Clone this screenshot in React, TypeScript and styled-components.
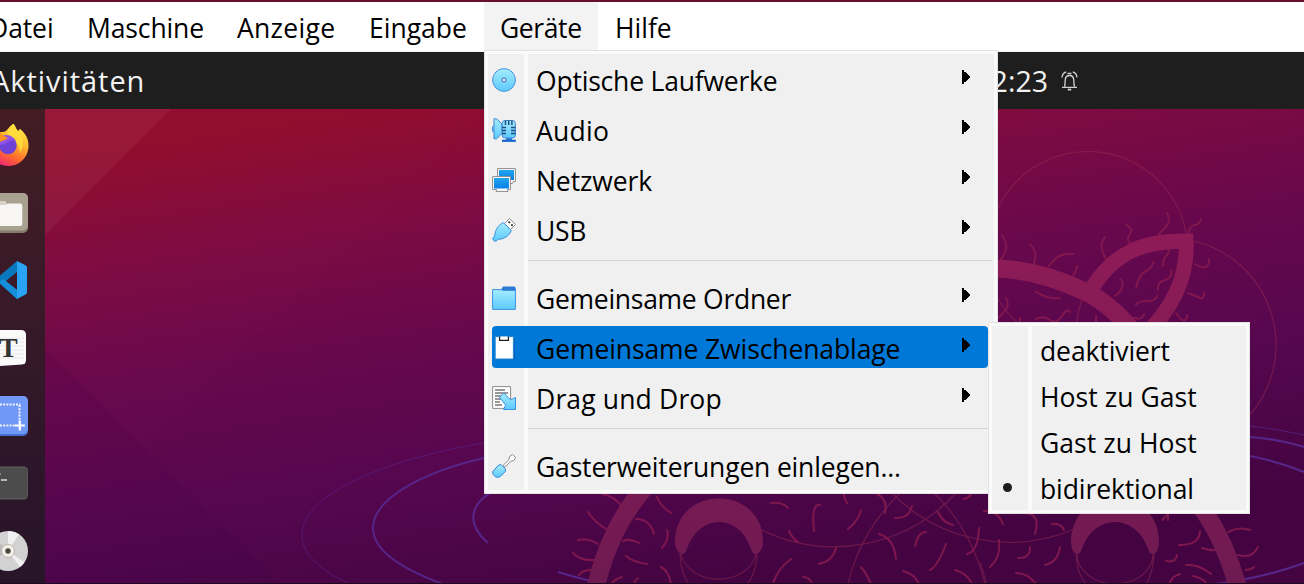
import React from "react";
import styled, { createGlobalStyle } from "styled-components";

const GlobalStyle = createGlobalStyle`
  * { box-sizing: border-box; }
  body { margin: 0; overflow: hidden; }
`;

const Screen = styled.div`
  position: relative;
  display: flex;
  flex-direction: column;
  width: 1304px;
  height: 584px;
  overflow: hidden;
  border-top: 2px solid #660f2c;
  font-family: "Open Sans", "Noto Sans", sans-serif;
  font-size: 26.5px;
  color: #000;
  background: #fff;
`;

const MenuBar = styled.nav`
  display: flex;
  flex: none;
  height: 50px;
  margin-left: -28px;
  background: #fff;
  border-bottom: 1px solid #f2f2f2;
`;

const MenuTitle = styled.span<{ $width: number; $open?: boolean; $track?: number }>`
  flex: none;
  width: ${(p) => p.$width}px;
  height: 48px;
  padding-left: ${(p) => (p.$open ? 16 : 17)}px;
  line-height: 53px;
  white-space: nowrap;
  letter-spacing: ${(p) => p.$track ?? 0}px;
  border-radius: 2px;
  background: ${(p) => (p.$open ? "#f3f3f3" : "transparent")};
`;

const Guest = styled.main`
  display: flex;
  flex-direction: column;
  flex: 1;
  min-height: 0;
  border-bottom: 1px solid #1f0a22;
`;

const TopPanel = styled.header`
  display: flex;
  flex: none;
  align-items: center;
  justify-content: space-between;
  height: 57px;
  padding-right: 226px;
  background: #1e1e1e;
  color: #f2f2f2;
`;

const Activities = styled.span`
  margin-left: -9px;
  font-size: 29px;
  letter-spacing: 0.95px;
`;

const Clock = styled.div`
  display: flex;
  align-items: center;
  gap: 13px;
  font-size: 28.500px;
`;

const Workspace = styled.div`
  display: flex;
  flex: 1;
  min-height: 0;
`;

const Dock = styled.aside`
  display: flex;
  flex-direction: column;
  flex: none;
  width: 45px;
  padding-top: 14px;
  gap: 23.67px;
  background: linear-gradient(#431c24, #391a28 40%, #2c1629 75%, #291528);
`;

const DockIcon = styled.svg`
  flex: none;
  display: block;
  width: 44px;
  height: 44px;
`;

const Wallpaper = styled.svg`
  display: block;
  width: 1259px;
  height: 474px;
`;

const Popup = styled.div<{ $x: number; $y: number; $width: number }>`
  position: absolute;
  left: ${(p) => p.$x}px;
  top: ${(p) => p.$y}px;
  width: ${(p) => p.$width}px;
  padding: 3px;
  border: 1px solid #e2e2e2;
  background: linear-gradient(to right, #f0f0f0 36px, #fafafa 36px, #fafafa 40px, #f0f0f0 40px) content-box, #fafafa;
`;

const Row = styled.div<{ $height: number; $active?: boolean }>`
  display: flex;
  align-items: center;
  height: ${(p) => p.$height}px;
  margin: ${(p) => (p.$active ? "4px 6px 4px 4px" : "0 6px 0 4px")};
  border-radius: 4px;
  background: ${(p) => (p.$active ? "#0078d7" : "transparent")};
`;

const IconSlot = styled.span`
  display: flex;
  flex: none;
  width: 44px;
  padding-top: 2px;
`;

const DotSlot = styled.span`
  flex: none;
  width: 44px;
  padding: 1px 0 0 7px;
`;

const Dot = styled.i`
  display: block;
  width: 9px;
  height: 9px;
  border-radius: 50%;
  background: #1b1b1b;
`;

const Label = styled.span<{ $track?: number }>`
  flex: 1;
  padding-top: 3px;
  line-height: 36px;
  white-space: nowrap;
  letter-spacing: ${(p) => p.$track ?? 0}px;
`;

const Separator = styled.hr`
  height: 1px;
  margin: 6px 2px 11px 40px;
  border: 0;
  background: #d5d5d5;
`;

const ArrowSvg = styled.svg`
  flex: none;
  display: block;
  margin: 0 18px 4px 0;
`;

const Arrow = () => (
  <ArrowSvg width="8" height="14" shapeRendering="crispEdges">
    <path d="M0 0h2v2h2v1h1v1h1v1h1v1h1v2h-1v1h-1v1h-1v1h-1v1h-2v2h-2z" />
  </ArrowSvg>
);

const MenuIcon = ({ children }: { children: React.ReactNode }) => (
  <svg width="24" height="24" viewBox="0 0 24 24">{children}</svg>
);

const DefsSvg = styled.svg`
  position: absolute;
`;

const Defs = () => (
  <DefsSvg width="0" height="0">
    <defs>
      <linearGradient id="sky" x2="0" y2="1">
        <stop stopColor="#a5ecff" />
        <stop offset="1" stopColor="#5cc9fb" />
      </linearGradient>
      <linearGradient id="screen" x2="0" y2="1">
        <stop stopColor="#22a6ee" />
        <stop offset="1" stopColor="#0a7fe6" />
      </linearGradient>
      <linearGradient id="flame" x1="0.8" y1="0" x2="0.3" y2="1">
        <stop stopColor="#fff04a" />
        <stop offset="0.4" stopColor="#ffb52e" />
        <stop offset="0.7" stopColor="#ff6a2c" />
        <stop offset="1" stopColor="#f0207a" />
      </linearGradient>
    </defs>
  </DefsSvg>
);

const DiscIcon = () => (
  <MenuIcon>
    <circle cx="12" cy="12" r="11.4" fill="url(#sky)" stroke="#4a90dc" />
    <circle cx="12" cy="12" r="2" fill="#eef" stroke="#5d8fc4" strokeWidth="1.3" />
  </MenuIcon>
);

const AudioIcon = () => (
  <MenuIcon>
    <path d="M2 7.500.6 9v4L2 14.500" fill="#8ce0ff" stroke="#3f87d6" />
    <path d="M2 .8h2.500L10 6v9.500l-5.500 5.300H2z" fill="url(#sky)" stroke="#3f87d6" />
    <path d="M14 20h6v2.500h-6z" fill="#2a7cd8" />
    <path d="M10 22.800h13.800" stroke="#1565cf" strokeWidth="2.200" />
    <rect x="10.200" y="2.500" width="13.200" height="17.500" rx="3" fill="url(#sky)" stroke="#3f87d6" />
    <path d="M13.500 2.500v4.500M16.700 2.500v4.500M19.900 2.500v4.500M10 9.500h4M10 12.500h4M10 15.500h4M19 9.500h4.500M19 12.500h4.500M19 15.500h4.500" stroke="#1d4f80" strokeWidth="1.500" />
  </MenuIcon>
);

const NetworkIcon = () => (
  <MenuIcon>
    <path d="M5.600.6h17.800v12.800h-2l-1 2.100h-7l-1-2.100H5.600z" fill="#fff" stroke="#8a8a8a" />
    <rect x="7" y="2" width="15" height="10" fill="url(#screen)" />
    <path d="M.6 8.600h17.800v12.800h-3l.6 2H4l.5-2H.6z" fill="#fff" stroke="#8a8a8a" />
    <rect x="2" y="10" width="15" height="10.500" fill="url(#screen)" />
  </MenuIcon>
);

const UsbIcon = () => (
  <MenuIcon>
    <path d="m12.500 5.500 5-5 6 6-5 5z" fill="#fff" stroke="#8a8a8a" />
    <path d="m17.200 4.200.1.100M20 7l.1.100" stroke="#333" strokeWidth="2" strokeLinecap="round" />
    <path d="M11.500 4.700 19.300 12.500c-1.500 4.500-6.300 8.700-13.300 8.800l-1.500 1.700c-2 .8-4.200-1-3.600-3.200l1.700-1.500C3 12 6.500 6.500 11.500 4.700z" fill="url(#sky)" stroke="#3f8edd" />
  </MenuIcon>
);

const FolderIcon = () => (
  <MenuIcon>
    <path d="m8 5 3-4.500h11.500L23.800 2v3z" fill="#2b78d6" />
    <path d="M.6 3.600H9.500l1.500.8h12.400v19H.6z" fill="url(#sky)" stroke="#3c92e0" />
  </MenuIcon>
);

const ClipboardIcon = () => (
  <MenuIcon>
    <path d="M22.300 2v22H4" fill="none" stroke="#0a5cb5" strokeWidth="1.200" />
    <path d="M3.200.6h18.200v22.400H3.200z" fill="#fff" stroke="#2588dc" strokeWidth="1" />
    <path d="M7.600.5v3.900h8.800V.5" fill="#fff" stroke="#222" strokeWidth="1.300" />
  </MenuIcon>
);

const DragIcon = () => (
  <MenuIcon>
    <path d="M.6.600h18v21.800H.6z" fill="#fff" stroke="#8a8a8a" />
    <path d="M3 4h10M3 7h13M3 10h8M3 13h6M3 16h5M3 19h7" stroke="#777" strokeWidth="1.300" />
    <path d="M7.500 11.300 11.800 7l6.700 6.800 5-2.300v12H11.600l2-4.500z" fill="url(#sky)" stroke="#3c92e0" />
  </MenuIcon>
);

const ScrewdriverIcon = () => (
  <MenuIcon>
    <path d="m11 11.500 5.800-5.700.7-3.300 3-2 3.200 3-2 3.200-3.200.6-5.500 6z" fill="#fff" stroke="#888" />
    <path d="m9 10.500 4.500 4.500-.2 2.500-5 5c-3 2.300-8-.5-7.600-5l6-6.400z" fill="url(#sky)" stroke="#3a87cf" />
  </MenuIcon>
);

const BellIcon = () => (
  <svg width="17" height="20" viewBox="0 0 17 20" fill="none" stroke="#d2d2d2" strokeWidth="1.300">
    <path d="M3.500 15.500c.7-2 .6-4 .7-6.500.2-2.800 1.800-4.500 4.300-4.500s4.100 1.700 4.300 4.500c.1 2.500 0 4.500.7 6.500M1 16.300h15" />
    <path d="M1 6.500C1.300 3.500 3 1.500 5.200 1M16 6.500C15.700 3.500 14 1.500 11.800 1M6.500 2.500h4" />
    <path d="M6.800 18.600h3.400" strokeWidth="1.800" />
  </svg>
);

const FirefoxIcon = () => (
  <DockIcon viewBox="0 0 44 44">
    <path d="M-12 24C-12 14-6 9 3 9c3 0 4.500-3 10.500-8.200 1.700 2 2 4.500 4.500 7.200 1-.5 1.500-1.200 1.700-2.200C25 10 28.500 15 28.500 22.500 28.500 34.500 19.500 43 8 43S-12 35-12 24z" fill="url(#flame)" />
    <path d="M8 12C6 6 10 3 13.500.8c1.700 2 2 4.500 4.500 7.200 5 6 7 14 2 22-1-8-5-14-12-18z" fill="#ffe23c" opacity=".75" />
    <circle cx="8" cy="22.500" r="8.700" fill="#6f42d8" />
    <path d="M2 13c6-3 12 1 14 5-2-1-6-1-7 0-2 2-3 3-9 4v-5z" fill="#9152e8" />
    <path d="M-2 8c3 3 7 6 10 7-2 2-4 2-10 5z" fill="#ff9022" />
  </DockIcon>
);

const FilesIcon = () => (
  <DockIcon viewBox="0 0 44 44">
    <rect x="-12" y="2" width="40" height="40" rx="5" fill="#857d6f" />
    <rect x="-12" y="2" width="40" height="37.500" rx="5" fill="#a8a190" />
    <path d="M-6 10H5.500l2 3.500-13.500 4z" fill="#d8d3c7" />
    <path d="M-6 14H5.500l2.500-1.500h12q2.300 0 2.300 2.300v18q0 2.300-2.300 2.300H-6z" fill="#f7f6f4" />
  </DockIcon>
);

const CodeIcon = () => (
  <DockIcon viewBox="0 0 44 44">
    <path d="M0 17.500 17 3v11L6 23l11 9v9L0 26z" fill="#0a78bd" />
    <path d="M-1 24 3 21l14 11v9z" fill="#168fd8" />
    <path d="M17 3l8.500 4.200q1.500.8 1.500 2.300v24.500q0 1.800-1.500 2.500L17 41z" fill="#2aa4f2" />
  </DockIcon>
);

const TextEditorIcon = () => (
  <DockIcon viewBox="0 0 44 44">
    <path d="M-12 4h33q5 0 5 5v25q0 4-4 4.500L-12 41z" fill="#fafafa" />
    <path d="M-4 12h28M-4 16h28M-4 20h28M-4 24h28M-4 28h28M-4 32h28" stroke="#e8e8e8" />
    <text x="-1" y="31" fontFamily="Liberation Serif, serif" fontWeight="700" fontSize="28" fill="#343434">T</text>
  </DockIcon>
);

const CaptureIcon = () => (
  <DockIcon viewBox="0 0 44 44">
    <rect x="-12" y="2" width="40" height="40" rx="5" fill="#456fd0" />
    <rect x="-12" y="2" width="40" height="38" rx="5" fill="#7098f6" />
    <path d="M0 10.500h20.500M19.500 11v17M0 31.500h15" fill="none" stroke="#fff" strokeWidth="2" strokeDasharray="2 1.200" opacity=".9" />
    <path d="M19.800 26.500v10M14.800 31.500h10" stroke="#fff" strokeWidth="2.200" />
  </DockIcon>
);

const TerminalIcon = () => (
  <DockIcon viewBox="0 0 44 44">
    <rect x="-12" y="5.500" width="40" height="33" rx="4.500" fill="#616161" />
    <rect x="-12" y="6.500" width="39.500" height="31" rx="4" fill="#4c4c4c" />
    <path d="M1 19h6" stroke="#ddd" strokeWidth="1.500" />
    <path d="m-2 11 2.500 2-2.500 2" stroke="#ddd" fill="none" />
  </DockIcon>
);

const CdIcon = () => (
  <DockIcon viewBox="0 0 44 44">
    <circle cx="8" cy="22" r="20" fill="#d2d2d2" />
    <path d="M8 22 8 2a20 20 0 0 1 11 3.300zM8 22l12 16a20 20 0 0 0 4.500-4.800z" fill="#f0f0f0" />
    <path d="M8 22-6 8-9 32z" fill="#bdbdbd" />
    <circle cx="8" cy="22" r="6.500" fill="#f2f0e8" stroke="#b9b5aa" />
    <circle cx="8" cy="22" r="2.700" fill="#4a4540" />
  </DockIcon>
);

const FUR = [
  "M1002 235q9 12-1 24M1030 244q8 8 4 19M1049 266q9-14 24-12M1077 266q-1 6-4 10M1106 259q-8-14-1-22M1126 224q8 6 4 10t0 10M1167 213q5 8-3 16t-4 6M1188 232q3-7 7-7t6-6",
  "M1195 264q10 7 14-1v-4M1188 293q8 3 12 5t4-5M1176 313q6 9 9 7t2-5",
  "M1169 249q0 5-3 7t-3 10M1153 262q0 6-7 9t-10 17M1121 279q5 9-6 17M1171 270q2 8-6 10t-7 10M1157 296q-1 5-10 5t-11 4M1144 314q-1 6-9 4t-10 4",
  "M1006 298q4 8-1 13t-7 7M1036 292q6 3 11 5t13 1M1036 319q8-4 14 1t12-4 8-4M1020 318v6M1096 316v6",
  "M602 494q13 2 21 14M588 512q7 11 20 18M578 540q11-2 20 4M573 553q7 8 21 7M579 575q3-5 12-5M636 519q14 0 18 15M623 541q7-3 16 2M626 556q7 6 21 8M667 530q3 8-5 18M657 497q4 10 14 16M611 584q4-5 11-7M634 584q1-4 4-6M661 567q8 4 10 17",
  "M771 503q12-1 17 5M820 505q-9-2-6 26M789 531q3 7 9 11M844 494q0 5 3 9M861 510q-2 10-13 19M877 494q11 5 8 19M895 518q14 1 17-12M938 512q5 11 15 13M879 534q15 4 17 25M926 532q-8 0-11 14M946 544q-8 22-16 26M836 548q-3 13-17 16M791 559q-14 10-18 25M861 567q6 7 10 17M903 571q12 3 16 13M955 570q12 3 17 14M803 577q7 0 9 7M979 528q-1 24-12 26M971 494q-2 4-7 5",
  "M984 511q14 0 19 13M1025 513q16 1 10 21M1052 524q9-1 12 6M999 540q2 18-9 27M1030 547q0 12-12 11M1060 547q-2 15-15 18M1016 573q12 0 20 11M1162 520q3-3 6-6M1200 531q0 14-21 14M1177 555q-1 8-11 6M1216 550q-4 1-14-2M1186 565q13-1 25 9M1180 574q-8 2-11 10M1193 576q10 2 14 8M1228 532q12-6 22-2M1238 555q14 4 20-8M1246 570q6-1 8-3M1168 514v6",
].join("");

const Scene = () => (
  <Wallpaper viewBox="45 109 1259 474" fill="none">
    <defs>
      <linearGradient id="dusk" gradientUnits="userSpaceOnUse" x1="470" y1="95" x2="550" y2="610">
        <stop stopColor="#920c2d" />
        <stop offset="0.220" stopColor="#7d0b42" />
        <stop offset="0.440" stopColor="#68084c" />
        <stop offset="0.700" stopColor="#56074f" />
        <stop offset="1" stopColor="#430441" />
      </linearGradient>
      <linearGradient id="pelt" gradientUnits="userSpaceOnUse" x1="0" y1="230" x2="0" y2="584">
        <stop stopColor="#8f1b57" />
        <stop offset="1" stopColor="#6f1a52" />
      </linearGradient>
    </defs>
    <path d="M45 109h1259v475H45z" fill="url(#dusk)" />
    <path d="M45 109h126L45 235z" fill="#fff" opacity=".05" />
    <path d="M45 235 171 109h313L145 448 45 348z" fill="#fff" opacity=".006" />
    <path d="M45 348 281 584H45z" fill="#100040" opacity=".04" />
    <g stroke="#a03055" strokeWidth="1.200" opacity=".45">
      <path d="M998 208A99.800 99.800 0 0 1 1186 233M1194 241A107 107 0 0 1 1250 415M1082 300q-4 10-5 22M998 299q8 14 20 24" />
      <path d="M762 530A165 165 0 0 0 955 494M893 494A165 165 0 0 0 1072 530" />
      <path d="M848 584q12-52 53-92M985 584q-14-56-52-92" />
      <path d="M681 554a38 30 0 0 0 75 0M680 554q1 20 9 30M757 554q-1 20-10 30M1077 554a38 30 0 0 0 76 0M1076 554q1 20 10 30M1154 554q-1 20-8 30M980 562q4 10 6 22" />
    </g>
    <g stroke="#572488">
      <path d="M350 584C313 567 302 550 302 535c0-40 80-75 182-92" opacity=".65" />
      <path d="M443 584c-44-16-70-34-70-56 0-28 46-55 111-70" strokeWidth="2" />
      <path d="M490 493c-22 14-22 33-2 50M558 572q22 7 48 12M1250 437q28 2 54 10M1250 456q27 5 54 16M1215 584q48-6 89-21" strokeWidth="2.200" />
      <path d="M1250 426q28 3 54 9" opacity=".8" />
    </g>
    <path d={FUR} stroke="#85194f" strokeWidth="2" strokeLinecap="round" opacity=".9" />
    <g stroke="url(#pelt)" strokeWidth="18">
      <path d="M980 269q50-4 108 24 25 13 50 44" />
      <path d="M648 484c-24 26-42 60-52 102M1196 500q28 36 42 88" />
      <path d="M1092 288c24-38 54-47 94-47 2 36-14 70-44 96" strokeWidth="15" />
    </g>
    <g fill="url(#pelt)">
      <path d="M682 554c-3 0-7-5-7-12 0-58 88-58 88 0 0 7-4 12-7 12-3 0-4-2-5-5-12-36-52-36-64 0-1 3-3 5-5 5z" />
      <path d="M1077 554c-3 0-6-5-6-12 0-58 88-58 88 0 0 7-3 12-6 12-3 0-4-2-5-5-12-36-54-36-66 0-1 3-3 5-5 5z" />
    </g>
  </Wallpaper>
);

type Entry = { icon: React.ReactNode; text: string; submenu?: boolean; active?: boolean; track?: number };

const groups: Entry[][] = [
  [
    { icon: <DiscIcon />, text: "Optische Laufwerke", submenu: true, track: -0.2 },
    { icon: <AudioIcon />, text: "Audio", submenu: true, track: 0.3 },
    { icon: <NetworkIcon />, text: "Netzwerk", submenu: true, track: -0.1 },
    { icon: <UsbIcon />, text: "USB", submenu: true, track: -0.3 },
  ],
  [
    { icon: <FolderIcon />, text: "Gemeinsame Ordner", submenu: true, track: -0.28 },
    { icon: <ClipboardIcon />, text: "Gemeinsame Zwischenablage", submenu: true, active: true, track: -0.1 },
    { icon: <DragIcon />, text: "Drag und Drop", submenu: true, track: 0.15 },
  ],
  [{ icon: <ScrewdriverIcon />, text: "Gasterweiterungen einlegen...", track: -0.17 }],
];

const modes: { text: string; checked?: boolean; track?: number }[] = [
  { text: "deaktiviert", track: -0.1 },
  { text: "Host zu Gast", track: 0.05 },
  { text: "Gast zu Host", track: 0.05 },
  { text: "bidirektional", checked: true, track: -0.1 },
];

export default function App() {
  return (
    <>
      <GlobalStyle />
      <Defs />
      <Screen>
        <MenuBar>
          <MenuTitle $width={98} $track={-0.1}>Datei</MenuTitle>
          <MenuTitle $width={150} $track={-0.12}>Maschine</MenuTitle>
          <MenuTitle $width={132} $track={0.3}>Anzeige</MenuTitle>
          <MenuTitle $width={132}>Eingabe</MenuTitle>
          <MenuTitle $width={114} $track={-0.4} $open>Geräte</MenuTitle>
          <MenuTitle $width={90}>Hilfe</MenuTitle>
        </MenuBar>
        <Guest>
          <TopPanel>
            <Activities>Aktivitäten</Activities>
            <Clock>
              <span>12:23</span>
              <BellIcon />
            </Clock>
          </TopPanel>
          <Workspace>
            <Dock>
              <FirefoxIcon />
              <FilesIcon />
              <CodeIcon />
              <TextEditorIcon />
              <CaptureIcon />
              <TerminalIcon />
              <CdIcon />
            </Dock>
            <Scene />
          </Workspace>
        </Guest>
        <Popup $x={484} $y={48} $width={514}>
          {groups.map((group, i) => (
            <React.Fragment key={i}>
              {i > 0 && <Separator />}
              {group.map((e) => (
                <Row key={e.text} $height={e.active ? 42 : 50} $active={e.active}>
                  <IconSlot>{e.icon}</IconSlot>
                  <Label $track={e.track}>{e.text}</Label>
                  {e.submenu && <Arrow />}
                </Row>
              ))}
            </React.Fragment>
          ))}
        </Popup>
        <Popup $x={988} $y={320} $width={262}>
          {modes.map((m) => (
            <Row key={m.text} $height={46}>
              <DotSlot>{m.checked && <Dot />}</DotSlot>
              <Label $track={m.track}>{m.text}</Label>
            </Row>
          ))}
        </Popup>
      </Screen>
    </>
  );
}
